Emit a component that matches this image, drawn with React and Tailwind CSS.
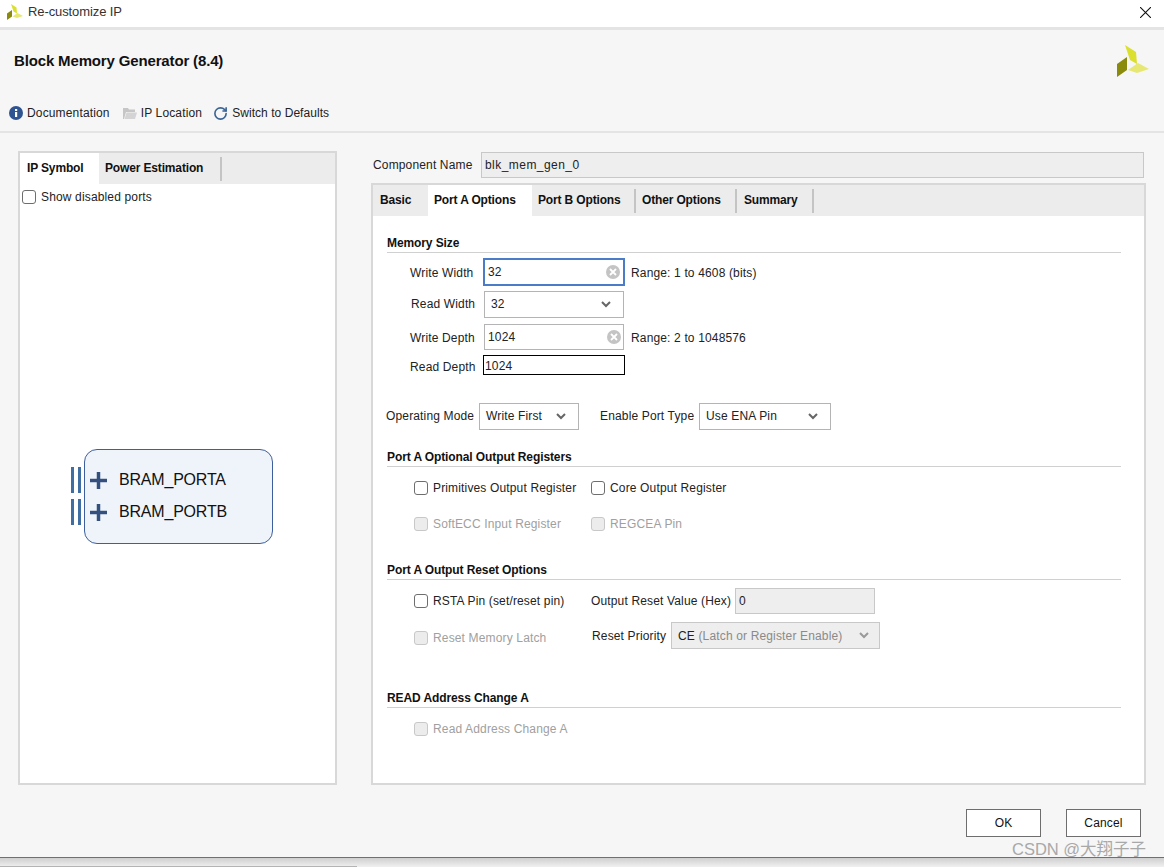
import React from 'react';
import { RotateCw } from 'lucide-react';

const Logo = ({ className }) => (
  <svg className={className} viewBox="0 0 32 32">
    <polygon points="8,0 19,7 20,19 13,15" fill="#dbe02f" />
    <polygon points="10,12 10,25 0,32 0,19" fill="#8a8a0c" />
    <polygon points="11,25 21,18 32,24 20,28" fill="#e6e873" />
  </svg>
);

const Chevron = ({ color = '#666' }) => (
  <svg className="w-[10px] h-[7px] shrink-0" viewBox="0 0 10 7" fill="none" stroke={color} strokeWidth="2">
    <path d="M1 1l4 4 4-4" />
  </svg>
);

const ClearIcon = () => (
  <svg className="w-[14px] h-[14px] shrink-0" viewBox="0 0 14 14">
    <circle cx="7" cy="7" r="7" fill="#c4c4c4" />
    <path d="M4 4l6 6M10 4l-6 6" stroke="#fff" strokeWidth="1.8" />
  </svg>
);

const Check = ({ label, disabled, className = '' }) => (
  <div className={`flex items-center gap-[5px] h-[16px] ${className}`}>
    <span className={`w-[14px] h-[14px] rounded-[3px] border shrink-0 ${disabled ? 'border-[#c8c8c8] bg-[#ececec]' : 'border-[#6e6e6e] bg-white'}`} />
    <span className={disabled ? 'text-[#a0a0a0]' : 'text-[#222]'}>{label}</span>
  </div>
);

const Section = ({ title, className = '' }) => (
  <div className={`font-bold tracking-[-0.1px] text-[#111] h-[15px] leading-[15px] pb-[16px] border-b border-[#d0d0d0] mr-[23px] ${className}`}>{title}</div>
);

const Select = ({ value, className = '' }) => (
  <div className={`flex items-center justify-between pl-[6px] pr-[12px] bg-white border border-[#b4b4b4] ${className}`}>
    <span className="-mt-[2px]">{value}</span>
    <Chevron />
  </div>
);

function TabStrip({ tabs, active, className = '' }) {
  return (
    <div className={`flex bg-[#ececec] ${className}`}>
      {tabs.map((t) => (
        <div key={t.label} className={`flex items-center font-bold tracking-[-0.15px] text-[#111] ${t.w} ${t.label === active ? 'bg-white' : ''}`}>
          <span className="-mt-[2px]">{t.label}</span>
          {t.sep && <span className="ml-auto w-[2px] h-[24px] bg-[#c4c4c4]" />}
        </div>
      ))}
    </div>
  );
}

const PortRow = ({ label }) => (
  <div className="flex items-center h-[26px] -ml-[14px]">
    <span className="w-[3px] h-[26px] bg-[#3f6ea3]" />
    <span className="w-[3px] h-[26px] bg-[#3f6ea3] ml-[4px]" />
    <svg className="w-[17px] h-[17px] ml-[9px]" viewBox="0 0 17 17">
      <path d="M0 8.5h17M8.5 0v17" stroke="#34507f" strokeWidth="3.5" />
    </svg>
    <span className="ml-[12px] text-[16px] tracking-[-0.2px] text-[#111] leading-none">{label}</span>
  </div>
);

export default function App() {
  return (
    <div className="relative w-[1164px] h-[867px] overflow-hidden flex flex-col bg-[#f6f6f6] text-[12px] tracking-[0.15px] text-[#222] font-['Liberation_Sans',Arial,sans-serif]">
      {/* title bar */}
      <div className="flex items-center h-[30px] shrink-0 bg-white border-b-[3px] border-[#e4e4e4] pl-[7px] pr-[13px] pb-[3px]">
        <Logo className="w-[16px] h-[16px]" />
        <span className="ml-[5px] text-[13px] tracking-[-0.1px] text-[#333]">Re-customize IP</span>
        <svg className="ml-auto w-[11px] h-[11px]" viewBox="0 0 11 11" stroke="#111" strokeWidth="1.1">
          <path d="M0 0l11 11M11 0L0 11" />
        </svg>
      </div>

      {/* header */}
      <div className="flex items-start h-[58px] shrink-0 pl-[14px] pr-[15px]">
        <div className="mt-[23px] text-[15px] tracking-[-0.15px] font-bold text-[#111] leading-[16px]">Block Memory Generator (8.4)</div>
        <Logo className="ml-auto mt-[15px] w-[32px] h-[32px]" />
      </div>

      {/* toolbar */}
      <div className="flex items-center h-[45px] shrink-0 border-b-2 border-[#e4e4e4] pl-[9px] pt-[7px]">
        <svg className="w-[14px] h-[14px]" viewBox="0 0 14 14">
          <circle cx="7" cy="7" r="7" fill="#2f5390" />
          <rect x="6" y="6" width="2.2" height="5" fill="#fff" />
          <rect x="6" y="3" width="2.2" height="2" fill="#fff" />
        </svg>
        <span className="ml-[4px]">Documentation</span>
        <svg className="ml-[13px] w-[14px] h-[12px]" viewBox="0 0 14 12">
          <path d="M0 1h5l1 1.5h6V5H3L1 12H0z" fill="#c6c6c6" />
          <path d="M3.5 5.5H14L12 12H1.5z" fill="#d4d4d4" />
        </svg>
        <span className="ml-[4px]">IP Location</span>
        <RotateCw className="ml-[11px] w-[15px] h-[15px] text-[#3a6496]" strokeWidth={2.6} />
        <span className="ml-[4px] tracking-[0.05px]">Switch to Defaults</span>
      </div>

      {/* main area */}
      <div className="flex flex-1 pt-[18px] pl-[18px]">
        {/* left panel */}
        <div className="flex flex-col w-[319px] h-[634px] shrink-0 border-2 border-[#d8d8d8] bg-white">
          <TabStrip
            className="h-[31px] shrink-0"
            active="IP Symbol"
            tabs={[
              { label: 'IP Symbol', w: 'w-[79px] pl-[7px]' },
              { label: 'Power Estimation', w: 'w-[123px] pl-[6px]', sep: true },
            ]}
          />
          <Check label="Show disabled ports" className="ml-[2px] mt-[5px]" />
          <div className="ml-[64px] mt-[244px] w-[189px] h-[95px] flex flex-col gap-[6px] pt-[17px] rounded-[13px] border border-[#3d5f9e] bg-[#eff4fa]">
            <PortRow label="BRAM_PORTA" />
            <PortRow label="BRAM_PORTB" />
          </div>
        </div>

        {/* right side */}
        <div className="ml-[34px] w-[775px] shrink-0 flex flex-col">
          <div className="flex items-center h-[26px] mt-[1px] pl-[2px]">
            <span className="w-[108px]">Component Name</span>
            <div className="w-[663px] h-[26px] flex items-center pl-[3px] tracking-[0.45px] bg-[#eeeeee] border border-[#c8c8c8]">blk_mem_gen_0</div>
          </div>
          <div className="mt-[5px] h-[602px] border-2 border-[#d8d8d8] bg-white flex flex-col">
            <TabStrip
              className="h-[31px] shrink-0"
              active="Port A Options"
              tabs={[
                { label: 'Basic', w: 'w-[55px] pl-[7px]' },
                { label: 'Port A Options', w: 'w-[104px] pl-[6px]' },
                { label: 'Port B Options', w: 'w-[104px] pl-[6px]', sep: true },
                { label: 'Other Options', w: 'w-[101px] pl-[6px]', sep: true },
                { label: 'Summary', w: 'w-[77px] pl-[7px]', sep: true },
              ]}
            />
            <div className="flex-1 pl-[14px]">
              <Section title="Memory Size" className="mt-[20px]" />

              <div className="flex items-center h-[28px] mt-[5px]">
                <span className="w-[96px] pl-[23px] mt-[2px]">Write Width</span>
                <div className="w-[142px] h-[28px] flex items-center justify-between pl-[3px] pr-[3px] bg-white border-2 border-[#4a7cc7]">
                  <span>32</span>
                  <ClearIcon />
                </div>
                <span className="ml-[6px] mt-[2px]">Range: 1 to 4608 (bits)</span>
              </div>
              <div className="flex items-center h-[27px] mt-[5px]">
                <span className="w-[97px] pl-[24px] -mt-[2px]">Read Width</span>
                <Select value="32" className="w-[140px] h-[27px]" />
              </div>
              <div className="flex items-center h-[26px] mt-[6px]">
                <span className="w-[97px] pl-[23px] mt-[2px]">Write Depth</span>
                <div className="w-[140px] h-[26px] flex items-center justify-between pl-[3px] pr-[2px] bg-white border border-[#b4b4b4]">
                  <span>1024</span>
                  <ClearIcon />
                </div>
                <span className="ml-[7px] mt-[2px]">Range: 2 to 1048576</span>
              </div>
              <div className="flex items-center h-[20px] mt-[5px]">
                <span className="w-[96px] pl-[23px] mt-[3px]">Read Depth</span>
                <div className="w-[142px] h-[20px] flex items-center pl-[1px] pt-[2px] bg-white border border-black">1024</div>
              </div>

              <div className="flex items-center h-[27px] mt-[28px]">
                <span className="w-[92px] -ml-[1px] -mt-[2px]">Operating Mode</span>
                <Select value="Write First" className="w-[100px] h-[27px] ml-[1px]" />
                <span className="ml-[21px] w-[99px] -mt-[2px]">Enable Port Type</span>
                <Select value="Use ENA Pin" className="w-[132px] h-[27px]" />
              </div>

              <Section title="Port A Optional Output Registers" className="mt-[20px]" />
              <div className="flex mt-[13px] pl-[27px]">
                <Check label="Primitives Output Register" className="w-[177px]" />
                <Check label="Core Output Register" />
              </div>
              <div className="flex mt-[20px] pl-[27px]">
                <Check label="SoftECC Input Register" disabled className="w-[177px]" />
                <Check label="REGCEA Pin" disabled />
              </div>

              <Section title="Port A Output Reset Options" className="mt-[31px]" />
              <div className="flex items-center h-[26px] mt-[8px] pl-[27px]">
                <Check label="RSTA Pin (set/reset pin)" className="w-[177px]" />
                <span className="w-[144px]">Output Reset Value (Hex)</span>
                <div className="w-[140px] h-[26px] flex items-center pl-[3px] bg-[#eeeeee] border border-[#c8c8c8]">0</div>
              </div>
              <div className="flex items-center h-[27px] mt-[8px] pl-[27px]">
                <Check label="Reset Memory Latch" disabled className="w-[178px] mt-[5px]" />
                <span className="w-[79px]">Reset Priority</span>
                <div className="w-[209px] h-[27px] flex items-center justify-between pl-[6px] pr-[10px] bg-[#eeeeee] border border-[#c8c8c8]">
                  <span>CE <span className="text-[#8a8a8a]">(Latch or Register Enable)</span></span>
                  <Chevron color="#999" />
                </div>
              </div>

              <Section title="READ Address Change A" className="mt-[42px]" />
              <Check label="Read Address Change A" disabled className="ml-[27px] mt-[13px]" />
            </div>
          </div>
        </div>
      </div>

      {/* footer */}
      <div className="flex justify-end gap-[25px] h-[72px] shrink-0 pr-[23px] pt-[24px]">
        <button className="w-[75px] h-[28px] bg-white border border-[#6e6e6e] text-[#111]">OK</button>
        <button className="w-[75px] h-[28px] bg-white border border-[#6e6e6e] text-[#111]">Cancel</button>
      </div>
      <div className="h-[10px] shrink-0 flex flex-col justify-end border-t border-[#707070] bg-gradient-to-b from-[#d0d0d0] to-[#f0f0f0]">
        <div className="w-[357px] h-[1px] bg-[#b4b4b4]" />
      </div>

      <span className="absolute left-[1012px] top-[838px] text-[16.5px] tracking-normal leading-[22px] text-[#a8a8a8] font-['Liberation_Sans','Noto_Sans_CJK_SC',sans-serif]">CSDN @大翔子子</span>
    </div>
  );
}
